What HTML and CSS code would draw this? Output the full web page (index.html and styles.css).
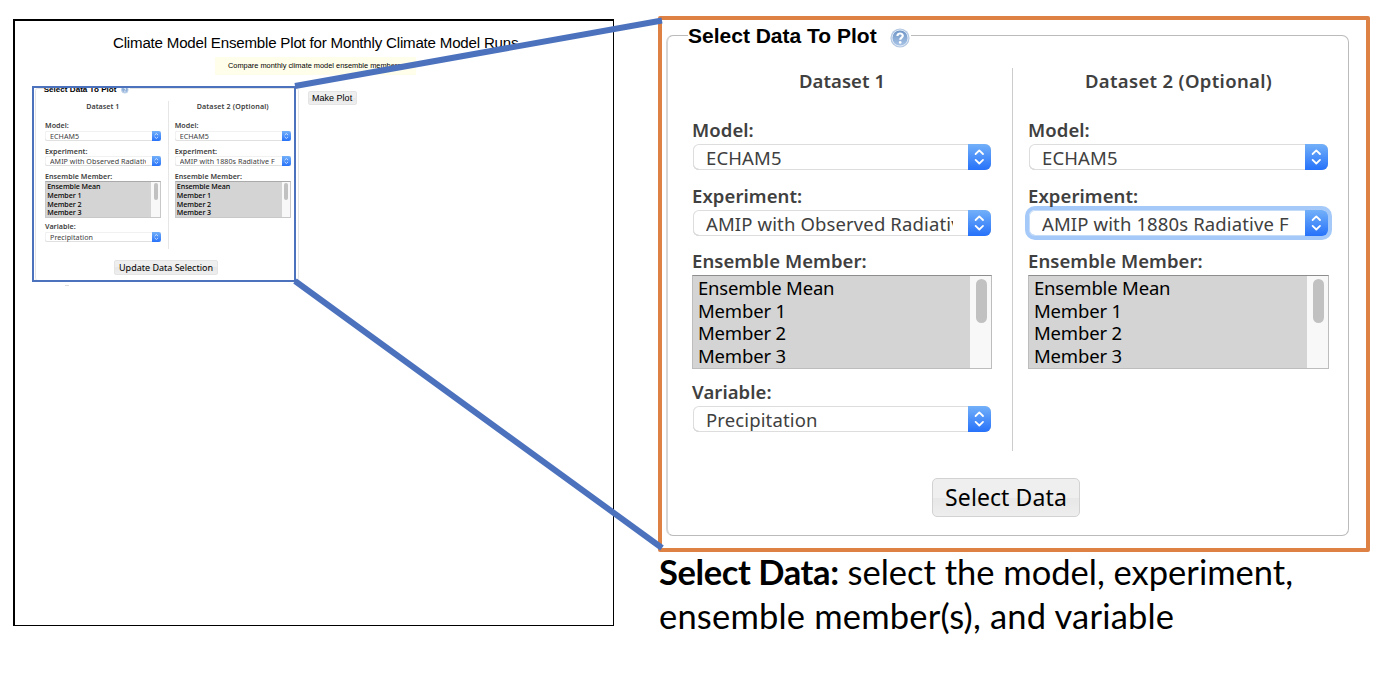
FILE: index.html
```html
<!DOCTYPE html>
<html lang="en">
<head>
<meta charset="utf-8">
<title>Climate Model Ensemble Plot</title>
<link rel="stylesheet" href="styles.css">
</head>
<body>
<svg class="defs" width="0" height="0" aria-hidden="true">
  <defs>
    <linearGradient id="ball" x1="0" y1="0" x2="0" y2="1"><stop offset="0" stop-color="#6d94c6"/><stop offset="1" stop-color="#a9c4e6"/></linearGradient>
  </defs>
  <symbol id="arrows" viewBox="0 0 23 26"><path d="M7.6 10 11.300 6.400 15 10M7.600 15.900 11.300 19.500 15 15.900" fill="none" stroke="#fff" stroke-width="1.800" stroke-linecap="round" stroke-linejoin="round"/></symbol>
  <symbol id="help" viewBox="0 0 20 20"><circle cx="10" cy="10" r="9.6" fill="#b4c8e2"/><circle cx="10" cy="10" r="8" fill="url(#ball)" stroke="#dce8f6" stroke-width="1"/><path d="M7.4 8C7.4 4.6 12.8 4.8 12.8 7.8 12.8 9.6 10.2 9.6 10.2 11.8" fill="none" stroke="#fff" stroke-width="2.2"/><circle cx="10.2" cy="14.4" r="1.3" fill="#fff"/></symbol>
</svg>
<main class="slide">
  <section class="page">
    <h1 class="title">Climate Model Ensemble Plot for Monthly Climate Model Runs</h1>
    <p class="banner">Compare monthly climate model ensemble members.</p>
    <div class="work">
      <div class="panel small">
        <div class="legend"><span>Select Data To Plot</span><svg class="help"><use href="#help"/></svg></div>
        <div class="cols">
          <div class="col">
            <h2>Dataset 1</h2>
            <div class="field"><b>Model:</b><div class="select"><span>ECHAM5</span><i><svg><use href="#arrows"/></svg></i></div></div>
            <div class="field"><b>Experiment:</b><div class="select"><span>AMIP with Observed Radiative</span><i><svg><use href="#arrows"/></svg></i></div></div>
            <div class="field tall"><b>Ensemble Member:</b><div class="list"><ul><li>Ensemble Mean</li><li>Member 1</li><li>Member 2</li><li>Member 3</li></ul><div class="track"><div class="thumb"></div></div></div></div>
            <div class="field"><b>Variable:</b><div class="select"><span>Precipitation</span><i><svg><use href="#arrows"/></svg></i></div></div>
          </div>
          <div class="col">
            <h2>Dataset 2 (Optional)</h2>
            <div class="field"><b>Model:</b><div class="select"><span>ECHAM5</span><i><svg><use href="#arrows"/></svg></i></div></div>
            <div class="field"><b>Experiment:</b><div class="select"><span>AMIP with 1880s Radiative F</span><i><svg><use href="#arrows"/></svg></i></div></div>
            <div class="field tall"><b>Ensemble Member:</b><div class="list"><ul><li>Ensemble Mean</li><li>Member 1</li><li>Member 2</li><li>Member 3</li></ul><div class="track"><div class="thumb"></div></div></div></div>
          </div>
        </div>
        <div class="button update">Update Data Selection</div>
      </div>
      <div class="button plot">Make Plot</div>
    </div>
    <div class="speck"></div>
    <div class="highlight"></div>
  </section>

  <section class="detail">
    <div class="frame">
      <div class="panel">
        <div class="legend"><span>Select Data To Plot</span><svg class="help"><use href="#help"/></svg></div>
        <div class="cols">
          <div class="col">
            <h2>Dataset 1</h2>
            <div class="field"><b>Model:</b><div class="select"><span>ECHAM5</span><i><svg><use href="#arrows"/></svg></i></div></div>
            <div class="field"><b>Experiment:</b><div class="select"><span>AMIP with Observed Radiative</span><i><svg><use href="#arrows"/></svg></i></div></div>
            <div class="field tall"><b>Ensemble Member:</b><div class="list"><ul><li>Ensemble Mean</li><li>Member 1</li><li>Member 2</li><li>Member 3</li></ul><div class="track"><div class="thumb"></div></div></div></div>
            <div class="field"><b>Variable:</b><div class="select"><span>Precipitation</span><i><svg><use href="#arrows"/></svg></i></div></div>
          </div>
          <div class="col">
            <h2>Dataset 2 (Optional)</h2>
            <div class="field"><b>Model:</b><div class="select"><span>ECHAM5</span><i><svg><use href="#arrows"/></svg></i></div></div>
            <div class="field"><b>Experiment:</b><div class="select focus"><span>AMIP with 1880s Radiative F</span><i><svg><use href="#arrows"/></svg></i></div></div>
            <div class="field tall"><b>Ensemble Member:</b><div class="list"><ul><li>Ensemble Mean</li><li>Member 1</li><li>Member 2</li><li>Member 3</li></ul><div class="track"><div class="thumb"></div></div></div></div>
          </div>
        </div>
        <div class="button">Select Data</div>
      </div>
    </div>
    <p class="caption"><strong>Select Data:</strong> select the model, experiment,<br><span class="second">ensemble member(s), and variable</span></p>
  </section>
  <svg class="lines" viewBox="0 0 1396 684"><path d="M295 86 662 20.500M295 281 662 548" stroke="#4c72be" stroke-width="6" fill="none"/></svg>
</main>
</body>
</html>
```
FILE: styles.css
```css
* { box-sizing: border-box; }
body { margin: 0; background: #fff; color: #000; font-family: "Noto Sans", sans-serif; }
h1, h2, p, ul { margin: 0; padding: 0; }
.defs { position: absolute; }

.slide {
  position: relative;
  width: 1396px;
  height: 684px;
  padding: 16px 26px 0 13px;
  display: flex;
  justify-content: space-between;
  align-items: flex-start;
  overflow: hidden;
}

/* Plot page on the left */
.page {
  position: relative;
  width: 601px;
  height: 607px;
  margin-top: 3px;
  border: solid #000;
  border-width: 2px 1px 1px 2px;
  font-family: "Liberation Sans", Arial, sans-serif;
}
.title {
  margin: 11px 0 0 98px;
  font-size: 15.1px;
  letter-spacing: -0.2px;
  line-height: 21px;
  height: 20px;
  font-weight: 400;
  white-space: nowrap;
}
.banner {
  width: 201px;
  height: 18px;
  margin: 5px 0 0 200px;
  padding-left: 13px;
  background: #fffeea;
  font-size: 7.4px;
  line-height: 18px;
  white-space: nowrap;
}
.work { display: flex; align-items: flex-start; margin: 13px 0 0 20px; }
.speck { width: 4px; height: 1px; margin: 4px 0 0 50px; background: #ddd; }
.highlight {
  position: absolute;
  left: 17px;
  top: 65px;
  width: 264px;
  height: 196px;
  border: 2px solid #4c72be;
}

/* Data panel, sized in multiples of --u */
.panel {
  --u: 1px;
  position: relative;
  width: calc(683 * var(--u));
  height: calc(501 * var(--u));
  padding: calc(32 * var(--u)) 0 0 calc(24 * var(--u));
  border: 1px solid #bbb;
  border-left: 2px solid #d6d6d6;
  border-radius: calc(7 * var(--u));
  font: calc(18.5 * var(--u))/calc(26 * var(--u)) "Noto Sans", sans-serif;
  color: #404040;
  white-space: nowrap;
}
.small { --u: 0.386px; border: 1px solid #e4e4e4; padding-left: 9px; padding-top: 12.4px; }
.legend {
  position: absolute;
  left: calc(20 * var(--u));
  top: calc(-13.5 * var(--u));
  height: calc(26 * var(--u));
  padding-right: 1px;
  display: flex;
  align-items: center;
  gap: calc(13 * var(--u));
  background: #fff;
  color: #000;
  font-family: "Liberation Sans", Arial, sans-serif;
  font-weight: 700;
  font-size: calc(21 * var(--u));
}
.small .legend { top: -4.5px; }
.help { width: calc(20 * var(--u)); height: calc(20 * var(--u)); margin-top: calc(4 * var(--u)); }
.cols { display: flex; height: calc(383 * var(--u)); }
.col { width: calc(301 * var(--u)); }
.col:first-child { width: calc(321 * var(--u)); padding-right: calc(20 * var(--u)); border-right: 1px solid #ccc; }
.small .col:first-child { border-color: #e6e6e6; padding-right: calc(19 * var(--u)); }
.col + .col { margin-left: calc(15 * var(--u)); }
.col h2 { font-size: inherit; font-weight: 600; letter-spacing: 0.018em; text-align: center; margin-bottom: calc(23 * var(--u)); }
.col:first-child h2 { letter-spacing: 0.003em; }
.field { height: calc(65.5 * var(--u)); }
.field.tall { height: calc(131 * var(--u)); }
.field b { display: block; font-weight: 600; letter-spacing: 0.004em; height: calc(27 * var(--u)); }
.select {
  display: flex;
  height: calc(26 * var(--u));
  margin: 0 1px;
  border-radius: calc(6 * var(--u));
  box-shadow: inset 0 0 0 1px #ddd, inset 0 -1px 0 #bbb;
  overflow: hidden;
}
.small .select { margin: 0; box-shadow: inset 0 0 0 0.5px #e4e4e4, inset 0 -1px 0 #ddd; }
.select span {
  flex: 1;
  overflow: hidden;
  margin: 0 calc(15 * var(--u)) 0 calc(13 * var(--u));
  line-height: calc(27 * var(--u));
  letter-spacing: 0.007em;
}
.select i { width: calc(23 * var(--u)); background: linear-gradient(#73b0f9, #2672fa); }
.select i svg { display: block; width: 100%; height: 100%; }
.select.focus { overflow: visible; box-shadow: 0 0 0 4px #a5caf9, inset 0 0 0 1px #c5dcf8, inset 0 -1px 0 #86b3ee; }
.select.focus i { border-radius: 0 6px 6px 0; }
.list {
  display: flex;
  height: calc(94 * var(--u));
  border: 1px solid #bdbdbd;
  border-top-color: #8d8d8d;
  background: #d4d4d4;
  color: #000;
}
.small .list { border-color: #c8c8c8; border-top-color: #aaa; }
.list ul { flex: 1; list-style: none; letter-spacing: -0.01em; padding: calc(1 * var(--u)) 0 0 calc(5 * var(--u)); line-height: calc(22.7 * var(--u)); }
.small .list ul { font-weight: 500; padding: 0 0 0 1.2px; line-height: 8.7px; }
.track { width: calc(21 * var(--u)); padding: calc(2.5 * var(--u)) calc(4 * var(--u)) 0 calc(6 * var(--u)); background: #f8f8f8; }
.thumb { height: calc(44 * var(--u)); border-radius: calc(6 * var(--u)); background: #c1c1c1; }

.button {
  display: flex;
  align-items: center;
  justify-content: center;
  border: 1px solid #d2d2d2;
  border-radius: 5px;
  background: linear-gradient(#efefef 50%, #e7e7e7 50%, #eee);
  color: #000;
}
.panel > .button { width: 148px; height: 39px; margin: 27px 0 0 240px; padding-bottom: 2px; font-size: 23px; letter-spacing: 0.1px; }
.panel > .update { width: 104px; height: 15px; margin: 11px 0 0 69px; padding: 0; font-size: 9px; letter-spacing: 0; border-color: #e4e4e4; border-radius: 2px; }
.plot { width: 49px; height: 14px; margin: 3px 0 0 9px; padding-bottom: 1px; font-size: 9px; border-color: #e4e4e4; border-radius: 2px; white-space: nowrap; }

/* Enlarged panel and caption */
.detail { width: 712px; }
.frame { height: 536px; padding: 15px 0 0 4px; border: 4px solid #de8144; border-radius: 2px; }
.caption { margin-top: -2px; padding-left: 1px; font: 34.5px/44px Lato, Carlito, sans-serif; white-space: nowrap; }
.caption strong { letter-spacing: -0.4px; }
.second { letter-spacing: 0.19px; }

.lines { position: absolute; left: 0; top: 0; width: 1396px; height: 684px; }
```
